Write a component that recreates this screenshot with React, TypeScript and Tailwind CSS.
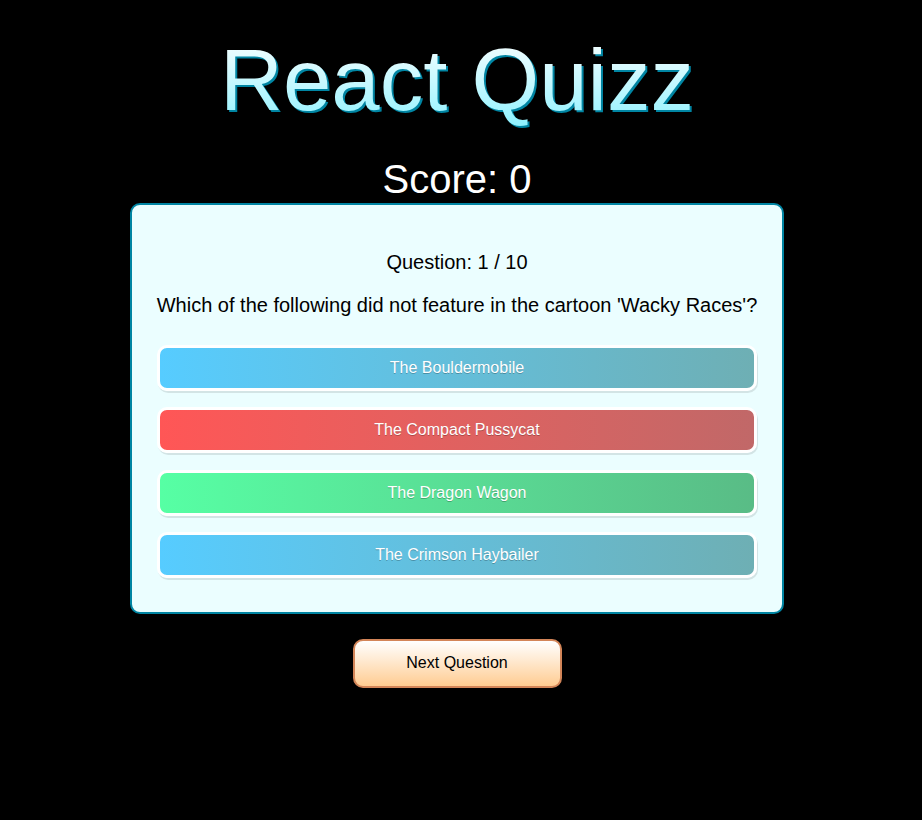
const answers = [
  { text: 'The Bouldermobile', state: 'idle' },
  { text: 'The Compact Pussycat', state: 'wrong' },
  { text: 'The Dragon Wagon', state: 'correct' },
  { text: 'The Crimson Haybailer', state: 'idle' },
]

const answerBg: Record<string, string> = {
  idle: 'bg-gradient-to-r from-[#56ccff] to-[#6eafb4]',
  wrong: 'bg-gradient-to-r from-[#ff5656] to-[#c16868]',
  correct: 'bg-gradient-to-r from-[#56ffa4] to-[#59bc86]',
}

export default function App() {
  return (
    <main className="min-h-screen bg-black font-['Liberation_Sans',Arial,sans-serif]">
      <div className="w-[914px] flex flex-col items-center pt-[30px]">
        <h1 className="text-[87px] leading-[100px] font-normal bg-gradient-to-b from-white to-[#87f1ff] bg-clip-text text-transparent [filter:drop-shadow(2px_2px_0_#0085a3)]">
          React Quizz
        </h1>
        <p className="mt-[26px] text-[40px] leading-[46px] text-white">Score: 0</p>

        <div className="mt-[1px] w-[654px] rounded-[10px] border-2 border-[#0085a3] bg-[#ebfeff] px-[20px] pt-[46px] pb-[34px] text-center shadow-[0_5px_10px_rgba(0,0,0,0.25)]">
          <p className="text-[20px] leading-[23px] text-black">Question: 1 / 10</p>
          <p className="mt-[20px] text-[20px] leading-[23px] text-black whitespace-nowrap">
            Which of the following did not feature in the cartoon 'Wacky Races'?
          </p>
          <div className="mt-[28px] px-[5px] flex flex-col gap-[16.3px]">
            {answers.map((a) => (
              <button
                key={a.text}
                className={`h-[46px] w-full rounded-[10px] border-[3px] border-white ${answerBg[a.state]} text-[16px] text-white [text-shadow:0_1px_0_rgba(0,0,0,0.25)] shadow-[1px_2px_0_rgba(0,0,0,0.1)]`}
              >
                {a.text}
              </button>
            ))}
          </div>
        </div>

        <button className="mt-[25px] h-[49px] w-[209px] rounded-[10px] border-2 border-[#d38558] bg-gradient-to-b from-white to-[#ffcc91] text-[16px] text-black shadow-[0_5px_10px_rgba(0,0,0,0.25)]">
          Next Question
        </button>
      </div>
    </main>
  )
}
